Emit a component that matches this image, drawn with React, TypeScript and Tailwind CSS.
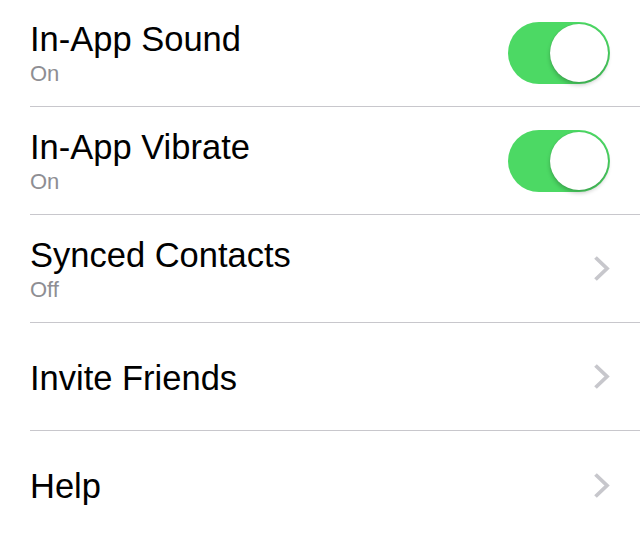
import React from "react";

type Row = {
  title: string;
  subtitle?: string;
  kind: "toggle" | "chevron";
};

const rows: Row[] = [
  { title: "In-App Sound", subtitle: "On", kind: "toggle" },
  { title: "In-App Vibrate", subtitle: "On", kind: "toggle" },
  { title: "Synced Contacts", subtitle: "Off", kind: "chevron" },
  { title: "Invite Friends", kind: "chevron" },
  { title: "Help", kind: "chevron" },
];

function Toggle() {
  return (
    <div className="relative h-[62px] w-[102px] rounded-full bg-[#4cd964]">
      <div className="absolute right-[2px] top-[2px] h-[58px] w-[58px] rounded-full bg-white shadow-[0_3px_4px_rgba(0,0,0,0.22),0_0_1px_rgba(0,0,0,0.2)]" />
    </div>
  );
}

function Chevron() {
  return (
    <svg width="19" height="27" viewBox="0 0 19 27" className="block">
      <polyline
        points="3.5,2.5 15,13.5 3.5,24.5"
        fill="none"
        stroke="#c7c7cc"
        strokeWidth="3.8"
        strokeLinejoin="miter"
        strokeLinecap="butt"
      />
    </svg>
  );
}

export default function App() {
  return (
    <div
      className="h-[537px] w-[640px] overflow-hidden bg-white pl-[30px]"
      style={{ fontFamily: '"Liberation Sans", Arial, sans-serif' }}
    >
      {rows.map((r, i) => (
        <div
          key={r.title}
          className={`flex items-center border-b border-[#c8c7cc] pr-[30px] ${
            i === 0 ? "h-[107px]" : i === rows.length - 1 ? "h-[108px] border-b-0" : "h-[108px]"
          }`}
        >
          <div className="flex-1 pt-[2px]">
            <div className="text-[34.5px] leading-[40px] text-black">{r.title}</div>
            {r.subtitle && (
              <div className="text-[22px] leading-[30px] text-[#8e8e93]">{r.subtitle}</div>
            )}
          </div>
          {r.kind === "toggle" ? <Toggle /> : <div className="mr-[-1px]"><Chevron /></div>}
        </div>
      ))}
    </div>
  );
}
